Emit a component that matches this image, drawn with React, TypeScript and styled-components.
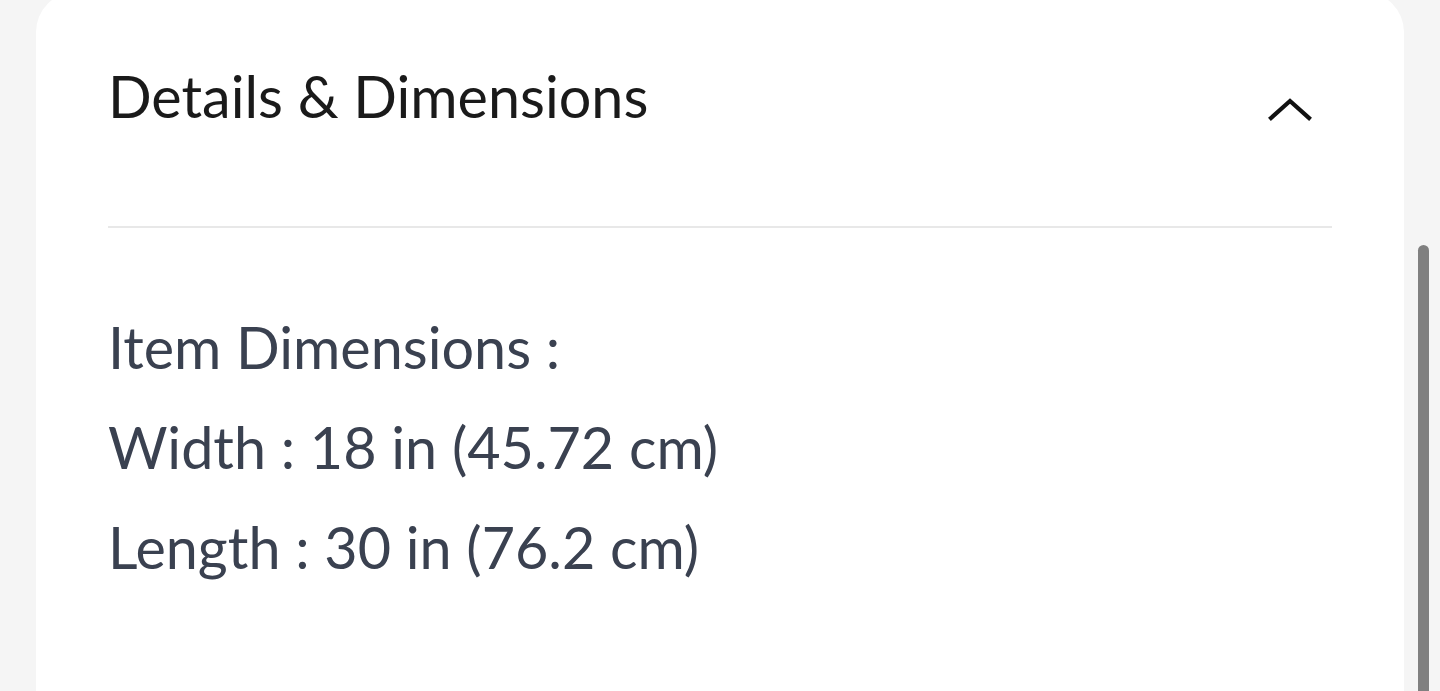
import React from "react";
import styled, { createGlobalStyle } from "styled-components";

const Global = createGlobalStyle`
  html, body { margin: 0; padding: 0; background: #f5f5f5; overflow: hidden; }
  body { font-family: "Lato", "Noto Sans", sans-serif; }
`;

const Page = styled.div`
  height: 691px;
  display: flex;
  padding: 0 36px;
  box-sizing: border-box;
  position: relative;
`;

const Card = styled.section`
  flex: 1;
  margin-top: -8px;
  background: #ffffff;
  border-radius: 40px 40px 0 0;
  padding: 0 72px;
  display: flex;
  flex-direction: column;
`;

const Header = styled.div`
  display: flex;
  align-items: flex-start;
  justify-content: space-between;
  box-sizing: border-box;
  height: 236px;
  padding-top: 75px;
  border-bottom: 2px solid #e8e8e8;
`;

const Title = styled.h2`
  margin: 0;
  font-size: 57.5px;
  font-weight: 400;
  color: #1a1a1a;
  line-height: 1;
`;

const Chevron = styled.svg`
  width: 48px;
  height: 28px;
  margin-top: 30px;
  margin-right: 18px;
`;

const Body = styled.div`
  display: flex;
  flex-direction: column;
  padding-top: 69px;
`;

const Line = styled.p`
  margin: 0;
  font-size: 57.5px;
  line-height: 100px;
  color: #3a4150;
`;

const Scrollbar = styled.div`
  position: absolute;
  right: 11px;
  top: 245px;
  bottom: 0;
  width: 11px;
  background: #808080;
  border-radius: 6px 6px 0 0;
`;

export default function App() {
  return (
    <>
      <Global />
      <Page>
        <Card>
          <Header>
            <Title>Details &amp; Dimensions</Title>
            <Chevron viewBox="0 0 48 28" fill="none">
              <path d="M5 21 L24 4 L43 21" stroke="#111" strokeWidth="4.2" strokeLinecap="square" strokeLinejoin="miter" />
            </Chevron>
          </Header>
          <Body>
            <Line>Item Dimensions :</Line>
            <Line>Width : 18 in (45.72 cm)</Line>
            <Line>Length : 30 in (76.2 cm)</Line>
          </Body>
        </Card>
        <Scrollbar />
      </Page>
    </>
  );
}
